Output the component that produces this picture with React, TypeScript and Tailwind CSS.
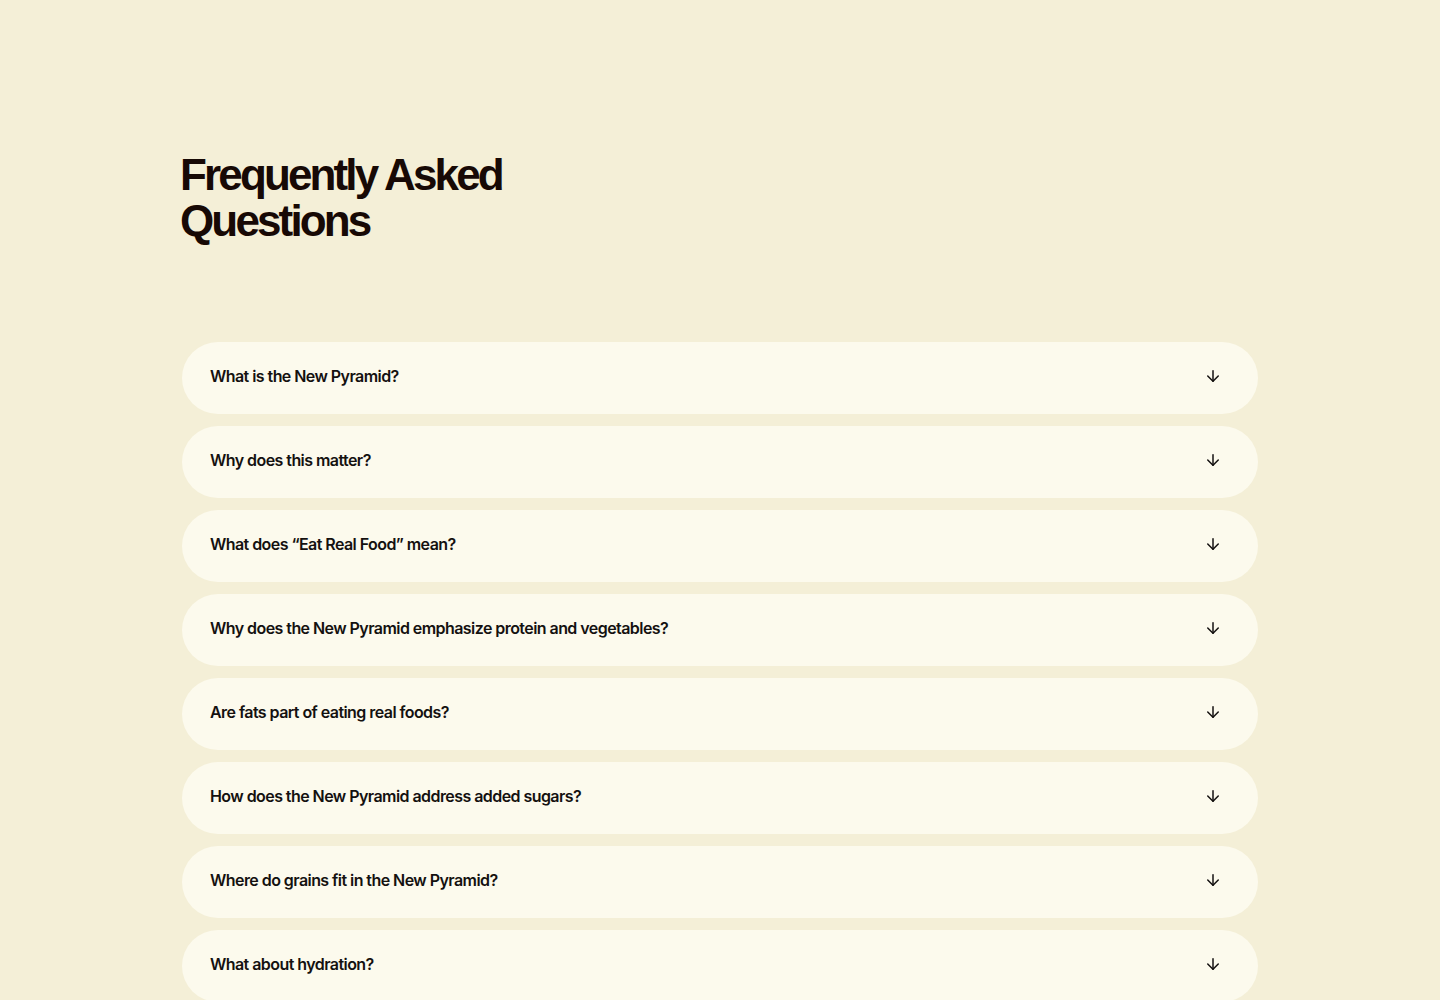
import React, { useState } from 'react';
import { ArrowDown } from 'lucide-react';

const faqs = [
  'What is the New Pyramid?',
  'Why does this matter?',
  'What does \u201cEat Real Food\u201d mean?',
  'Why does the New Pyramid emphasize protein and vegetables?',
  'Are fats part of eating real foods?',
  'How does the New Pyramid address added sugars?',
  'Where do grains fit in the New Pyramid?',
  'What about hydration?',
];

const FaqRow: React.FC<{ question: string }> = ({ question }) => {
  const [open, setOpen] = useState(false);
  return (
    <button
      onClick={() => setOpen(o => !o)}
      className="flex h-[72px] w-full items-center justify-between rounded-full bg-[#fcfaed] pb-[4px] pl-[28px] pr-[36px] text-left"
    >
      <span className="font-['Inter',sans-serif] text-[16px] font-semibold tracking-[-0.035em] text-[#141110]">{question}</span>
      <ArrowDown size={18} strokeWidth={2} className={`text-[#141110] transition-transform ${open ? 'rotate-180' : ''}`} />
    </button>
  );
};

const App: React.FC = () => {
  return (
    <div className="min-h-screen bg-[#f4efd7]">
      <div className="mx-auto w-[1080px] pt-[152px]">
        <h2 className="font-['Liberation_Sans',Arial,sans-serif] text-[44px] font-bold leading-[46px] tracking-[-0.065em] text-[#170905]">
          Frequently Asked
          <br />
          Questions
        </h2>
        <div className="mt-[98px] flex flex-col gap-[12px] px-[2px]">
          {faqs.map(q => (
            <FaqRow key={q} question={q} />
          ))}
        </div>
      </div>
    </div>
  );
};

export default App;
